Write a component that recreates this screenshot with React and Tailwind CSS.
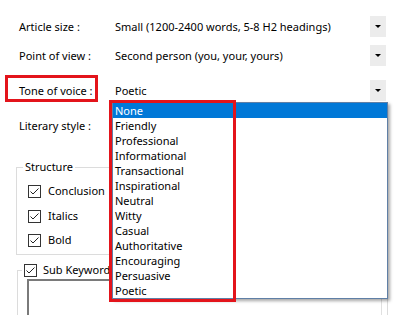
import React from "react";

function Arrow() {
  return (
    <div className="w-[16px] h-[21px] bg-[#ececec] flex items-center justify-center">
      <div className="w-0 h-0 border-l-[3px] border-r-[3px] border-t-[3px] border-l-transparent border-r-transparent border-t-black" />
    </div>
  );
}

function Row({ label, value, className }) {
  return (
    <div className={"flex items-center h-[21px] " + className}>
      <div className="w-[96px] whitespace-nowrap">{label}</div>
      <div className="flex-1 whitespace-nowrap">{value}</div>
      <Arrow />
    </div>
  );
}

function Check() {
  return (
    <div className="w-[13px] h-[13px] border border-[#333] bg-white flex items-center justify-center shrink-0">
      <svg width="11" height="11" viewBox="0 0 11 11">
        <path d="M1.5 5.5 L4 8 L9.5 2.5" fill="none" stroke="#222" strokeWidth="1" />
      </svg>
    </div>
  );
}

function CheckRow({ label, className }) {
  return (
    <div className={"flex items-center h-[16px] ml-[11px] " + className}>
      <Check />
      <span className="ml-[7px] whitespace-nowrap">{label}</span>
    </div>
  );
}

const tones = [
  "None",
  "Friendly",
  "Professional",
  "Informational",
  "Transactional",
  "Inspirational",
  "Neutral",
  "Witty",
  "Casual",
  "Authoritative",
  "Encouraging",
  "Persuasive",
  "Poetic",
];

export default function App() {
  return (
    <div className="relative w-[407px] h-[315px] overflow-hidden bg-white text-black font-['Noto_Sans',sans-serif] text-[11px] leading-[14px]">
      <div className="pl-[19px] pr-[21px]">
        <Row className="mt-[16px]" label="Article size :" value="Small (1200-2400 words, 5-8 H2 headings)" />
        <Row className="mt-[8px]" label="Point of view :" value="Second person (you, your, yours)" />
        <Row className="mt-[14px]" label="Tone of voice :" value="Poetic" />
        <Row className="mt-[14px]" label="Literary style :" value="" />
      </div>

      <fieldset className="mt-[24px] ml-[16px] w-[210px] border border-[#dcdcdc] pb-[6px]">
        <legend className="ml-[6px] px-[2px] leading-[14px]">Structure</legend>
        <CheckRow className="mt-[9px]" label="Conclusion" />
        <CheckRow className="mt-[9px]" label="Italics" />
        <CheckRow className="mt-[8px]" label="Bold" />
      </fieldset>

      <fieldset className="mt-[8px] ml-[17px] w-[371px] border border-[#dcdcdc] pb-[4px]">
        <legend className="ml-[4px] px-[2px] leading-[14px]">
          <span className="flex items-center">
            <Check />
            <span className="ml-[6px]">Sub Keyword</span>
          </span>
        </legend>
        <div className="mt-[2px] ml-[9px] mr-[5px] h-[60px] border-t-2 border-l-2 border-t-[#7a7a7a] border-l-[#7a7a7a] border-r border-b border-r-[#e0e0e0] border-b-[#e0e0e0]" />
      </fieldset>

      <div className="absolute left-[112px] top-[102px] w-[276px] border border-[#5f7fa6] bg-white shadow-[2px_2px_3px_rgba(0,0,0,0.35)]">
        {tones.map((t, i) => (
          <div
            key={t}
            className={
              "h-[15px] pl-[2px] leading-[15px] whitespace-nowrap " +
              (i === 0 ? "bg-[#0078d7] text-white" : "")
            }
          >
            {t}
          </div>
        ))}
      </div>

      <div className="absolute left-[5px] top-[75px] w-[93px] h-[27px] border-[3px] border-[#e3141b]" />
      <div className="absolute left-[109px] top-[100px] w-[127px] h-[202px] border-[3px] border-[#e3141b]" />
    </div>
  );
}
